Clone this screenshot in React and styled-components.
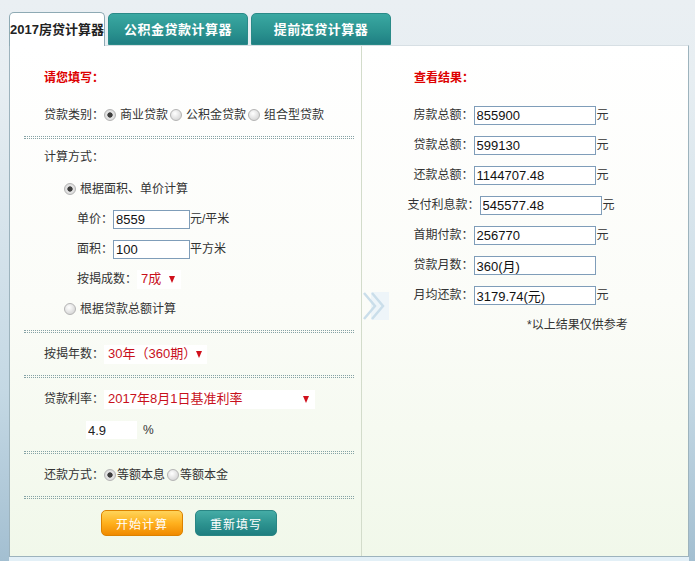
import React, { useState } from "react"
import styled, { createGlobalStyle } from "styled-components"

const GlobalStyle = createGlobalStyle`
  html, body {
    margin: 0;
    padding: 0;
  }
  body {
    background: linear-gradient(#eaeff3 0, #e7eef2 80px, #c4d8e4 70%, #a3bfd1 100%);
    font-family: "Liberation Sans", "Noto Sans CJK SC", sans-serif;
    font-size: 12px;
    color: #333;
  }
`

const Page = styled.div`
  width: 695px;
  height: 561px;
  overflow: hidden;
`

const Tabs = styled.div`
  display: flex;
  align-items: flex-end;
  gap: 3px;
  padding: 12px 0 0 9px;
  height: 33px;
  position: relative;
  z-index: 2;
`

const Tab = styled.div`
  box-sizing: border-box;
  height: ${(p) => (p.$active ? "34px" : "32px")};
  width: ${(p) => (p.$active ? "96px" : "140px")};
  margin-bottom: ${(p) => (p.$active ? "-1px" : "0")};
  border-radius: 5px 5px 0 0;
  display: flex;
  align-items: center;
  justify-content: center;
  font-size: 13px;
  font-weight: bold;
  line-height: 1;
  color: ${(p) => (p.$active ? "#222" : "#fff")};
  background: ${(p) =>
    p.$active ? "#fff" : "linear-gradient(#3aa8a2, #2a928f 60%, #1f7f83)"};
  border: 1px solid ${(p) => (p.$active ? "#8eaab4" : "#2a8a88")};
  border-bottom: ${(p) => (p.$active ? "none" : "1px solid #2a8a88")};
  letter-spacing: ${(p) => (p.$active ? "0" : "0.5px")};
`

const Panel = styled.div`
  position: relative;
  margin-left: 9px;
  width: 680px;
  height: 512px;
  box-sizing: border-box;
  display: grid;
  grid-template-columns: 351px 1px 1fr;
  border: 1px solid #9db3bd;
  border-top-color: #d7dfe4;
  background: #fff;
`

const Footer = styled.div`
  margin-left: 9px;
  width: 680px;
  height: 6px;
  background: #e3f0f7;
`

const Column = styled.div`
  background: linear-gradient(#ffffff 0, #fbfcf8 50%, #f1f8ea 100%);
  padding-top: 24px;
  display: flex;
  flex-direction: column;
`

const Divider = styled.div`
  background: #d3dccb;
`

const Chevrons = styled.svg`
  position: absolute;
  left: 351px;
  top: 244px;
`

const Heading = styled.div`
  color: #dd0000;
  font-weight: bold;
  font-size: 12px;
  line-height: 16px;
  padding-left: ${(p) => p.$left || 34}px;
  margin-bottom: 14px;
`

const Row = styled.div`
  display: flex;
  align-items: center;
  height: 30px;
  padding-left: ${(p) => p.$left || 34}px;
  margin-top: ${(p) => p.$top || 0}px;
  white-space: nowrap;
  line-height: 16px;
`

const Dots = styled.div`
  margin: 6px 7px 3px 14px;
  height: 1px;
  border-top: 1px dotted #86a3a6;
  border-bottom: 1px dotted #86a3a6;
`

const Radio = styled.input.attrs({ type: "radio" })`
  appearance: none;
  width: 12px;
  height: 12px;
  margin: 0 ${(p) => p.$gap ?? 4}px 0 ${(p) => p.$lead || 0}px;
  border-radius: 50%;
  border: 1px solid #b4b4b4;
  box-sizing: border-box;
  background: radial-gradient(circle at 40% 35%, #ffffff, #d8d8d8 75%);
  flex: none;
  &:checked {
    background: radial-gradient(circle, #3d3d3d 0, #3d3d3d 2.3px, #e6e6e6 3px, #d0d0d0 100%);
  }
`

const TextInput = styled.input`
  box-sizing: border-box;
  width: ${(p) => p.$width || 77}px;
  height: 19px;
  border: 1px solid #7f9db9;
  padding: 0 2px;
  font-family: "Liberation Sans", "Noto Sans CJK SC", sans-serif;
  font-size: 13px;
  color: #111;
  background: #fff;
  outline: none;
`

const PlainInput = styled(TextInput)`
  border: none;
  width: 51px;
  height: 18px;
  color: #222;
`

const Select = styled.div`
  box-sizing: border-box;
  width: ${(p) => p.$width}px;
  height: 19px;
  display: flex;
  align-items: center;
  justify-content: space-between;
  padding: 0 6px 0 4px;
  background: #fff;
  color: #c8101c;
  font-size: 13px;
`

const Caret = styled.span`
  width: 0;
  height: 0;
  border-left: 3.5px solid transparent;
  border-right: 3.5px solid transparent;
  border-top: 7px solid #d0101c;
`

const Unit = styled.span`
  visibility: ${(p) => (p.$hidden ? "hidden" : "visible")};
  margin-left: ${(p) => p.$gap || 1}px;
`

const Buttons = styled.div`
  display: flex;
  gap: 12px;
  padding-left: 91px;
  margin-top: 8px;
`

const Button = styled.button`
  width: 82px;
  height: 26px;
  border-radius: 5px;
  font-family: "Noto Sans CJK SC", sans-serif;
  font-size: 12px;
  color: #fff;
  letter-spacing: 1px;
  cursor: pointer;
  border: 1px solid ${(p) => (p.$tone === "orange" ? "#dc8200" : "#2a8684")};
  background: ${(p) =>
    p.$tone === "orange"
      ? "linear-gradient(#ffd45a, #ffb11e 50%, #f08a00)"
      : "linear-gradient(#45aca6, #2c928f 55%, #1f7e80)"};
`

const ResultRow = styled.div`
  display: flex;
  align-items: center;
  justify-content: center;
  height: 30px;
  padding-right: 28px;
  white-space: nowrap;
  line-height: 16px;
`

const Note = styled.div`
  height: 30px;
  line-height: 30px;
  padding-left: 165px;
`

const results = [
  ["房款总额：", "855900", true],
  ["贷款总额：", "599130", true],
  ["还款总额：", "1144707.48", true],
  ["支付利息款：", "545577.48", true],
  ["首期付款：", "256770", true],
  ["贷款月数：", "360(月)", false],
  ["月均还款：", "3179.74(元)", true],
]

export default function App() {
  const [loanType, setLoanType] = useState("biz")
  const [mode, setMode] = useState("area")
  const [repay, setRepay] = useState("equal")
  const [price, setPrice] = useState("8559")
  const [area, setArea] = useState("100")
  const [rate, setRate] = useState("4.9")

  return (
    <Page>
      <GlobalStyle />
      <Tabs>
        <Tab $active>2017房贷计算器</Tab>
        <Tab>公积金贷款计算器</Tab>
        <Tab>提前还贷计算器</Tab>
      </Tabs>
      <Panel>
        <Column>
          <Heading>请您填写：</Heading>
          <Row>
            贷款类别：
            <Radio checked={loanType === "biz"} onChange={() => setLoanType("biz")} />
            商业贷款
            <Radio $lead={2} checked={loanType === "fund"} onChange={() => setLoanType("fund")} />
            公积金贷款
            <Radio $lead={2} checked={loanType === "mix"} onChange={() => setLoanType("mix")} />
            组合型贷款
          </Row>
          <Dots />
          <Row>计算方式：</Row>
          <Row $left={54} $top={2}>
            <Radio checked={mode === "area"} onChange={() => setMode("area")} />
            根据面积、单价计算
          </Row>
          <Row $left={67}>
            单价：
            <TextInput value={price} onChange={(e) => setPrice(e.target.value)} />
            元/平米
          </Row>
          <Row $left={67}>
            面积：
            <TextInput value={area} onChange={(e) => setArea(e.target.value)} />
            平方米
          </Row>
          <Row $left={67}>
            按揭成数：
            <Select $width={44}>
              7成
              <Caret />
            </Select>
          </Row>
          <Row $left={54}>
            <Radio checked={mode === "total"} onChange={() => setMode("total")} />
            根据贷款总额计算
          </Row>
          <Dots />
          <Row $top={3}>
            按揭年数：
            <Select $width={103}>
              30年（360期）
              <Caret />
            </Select>
          </Row>
          <Dots />
          <Row $top={3}>
            贷款利率：
            <Select $width={211}>
              2017年8月1日基准利率
              <Caret />
            </Select>
          </Row>
          <Row $left={76} $top={1}>
            <PlainInput value={rate} onChange={(e) => setRate(e.target.value)} />
            <Unit $gap={6}>%</Unit>
          </Row>
          <Dots />
          <Row $top={3}>
            还款方式：
            <Radio $gap={1} checked={repay === "equal"} onChange={() => setRepay("equal")} />
            等额本息
            <Radio $lead={2} $gap={1} checked={repay === "principal"} onChange={() => setRepay("principal")} />
            等额本金
          </Row>
          <Dots />
          <Buttons>
            <Button $tone="orange">开始计算</Button>
            <Button $tone="teal">重新填写</Button>
          </Buttons>
        </Column>
        <Divider />
        <Column>
          <Heading $left={52}>查看结果：</Heading>
          {results.map(([label, value, unit]) => (
            <ResultRow key={label}>
              {label}
              <TextInput $width={122} value={value} readOnly />
              <Unit $hidden={!unit}>元</Unit>
            </ResultRow>
          ))}
          <Note>*以上结果仅供参考</Note>
        </Column>
        <Chevrons width="30" height="32" viewBox="0 0 30 32">
          <rect x="10" y="2" width="18" height="28" fill="#eef5f9" />
          <path d="M11 3 L22 16 L11 29" fill="none" stroke="#cadeea" strokeWidth="2.5" />
          <path d="M3 3 L14 16 L3 29" fill="none" stroke="#cadeea" strokeWidth="2.5" />
        </Chevrons>
      </Panel>
      <Footer />
    </Page>
  )
}
